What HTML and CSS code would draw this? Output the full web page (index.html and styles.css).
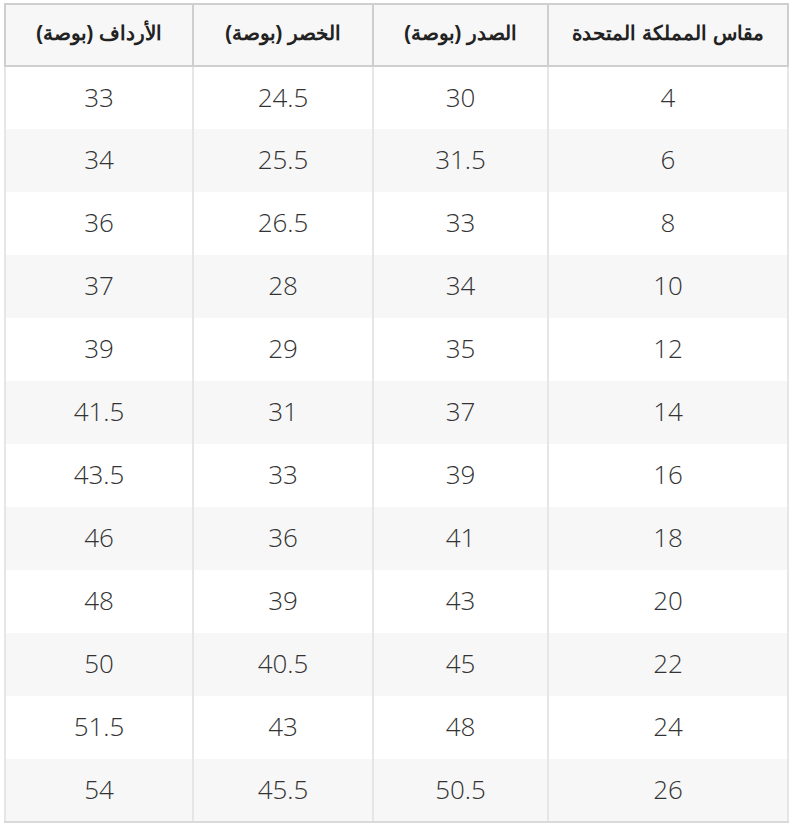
FILE: index.html
```html
<!DOCTYPE html>
<html lang="ar" dir="rtl">
<head>
<meta charset="utf-8">
<link rel="stylesheet" href="styles.css">
</head>
<body>
<div class="wrap">
<table class="sizes">
<colgroup><col class="c1"><col class="c2"><col class="c3"><col class="c4"></colgroup>
<thead>
<tr><th>مقاس المملكة المتحدة</th><th>الصدر (بوصة)</th><th>الخصر (بوصة)</th><th>الأرداف (بوصة)</th></tr>
</thead>
<tbody>
<tr><td>4</td><td>30</td><td>24.5</td><td>33</td></tr>
<tr><td>6</td><td>31.5</td><td>25.5</td><td>34</td></tr>
<tr><td>8</td><td>33</td><td>26.5</td><td>36</td></tr>
<tr><td>10</td><td>34</td><td>28</td><td>37</td></tr>
<tr><td>12</td><td>35</td><td>29</td><td>39</td></tr>
<tr><td>14</td><td>37</td><td>31</td><td>41.5</td></tr>
<tr><td>16</td><td>39</td><td>33</td><td>43.5</td></tr>
<tr><td>18</td><td>41</td><td>36</td><td>46</td></tr>
<tr><td>20</td><td>43</td><td>39</td><td>48</td></tr>
<tr><td>22</td><td>45</td><td>40.5</td><td>50</td></tr>
<tr><td>24</td><td>48</td><td>43</td><td>51.5</td></tr>
<tr><td>26</td><td>50.5</td><td>45.5</td><td>54</td></tr>
</tbody>
</table>
</div>
</body>
</html>
```
FILE: styles.css
```css
html, body { margin: 0; padding: 0; background: #fff; }
.wrap { padding: 3px 6px 0 6px; }
.sizes {
  width: 783px;
  border-collapse: collapse;
  table-layout: fixed;
}
.c4 { width: 188px; }
.c3 { width: 180px; }
.c2 { width: 175px; }
.c1 { width: 240px; }
.sizes th {
  height: 62px;
  box-sizing: border-box;
  padding: 0 0 4px;
  background: #f7f7f7;
  border: 2px solid #cfcfcf;
  font-family: "Liberation Sans", Arial, sans-serif;
  font-weight: bold;
  font-size: 20px;
  color: #222;
  text-align: center;
  vertical-align: middle;
}
.sizes td {
  height: 63px;
  box-sizing: border-box;
  padding: 0 0 3px;
  border-left: 2px solid #e6e6e6;
  border-right: 2px solid #e6e6e6;
  font-family: "Open Sans", sans-serif;
  font-weight: 300;
  font-size: 26px;
  color: #333;
  text-align: center;
  vertical-align: middle;
}
.sizes tbody tr:nth-child(even) td { background: #f7f7f7; }
.sizes tbody tr:last-child td { border-bottom: 2px solid #d9d9d9; }
```
